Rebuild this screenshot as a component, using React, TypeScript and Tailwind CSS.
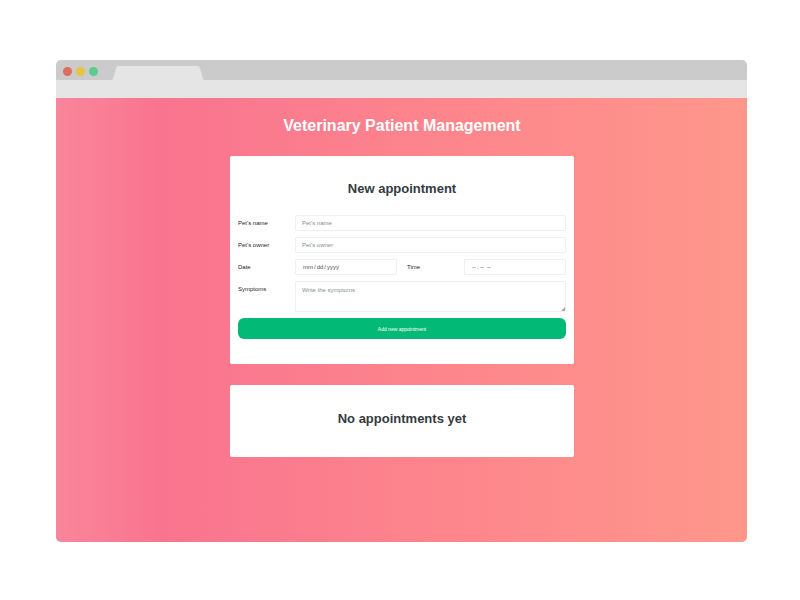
import type { ReactNode } from 'react';

const field =
  'block w-full rounded-[1px] border border-[#f0f0f0] bg-white px-[6px] text-[6px] leading-[8px] outline-none placeholder:text-[#868e96] placeholder:opacity-100';

function Label({ htmlFor, indent, children }: { htmlFor: string; indent?: boolean; children: ReactNode }) {
  return (
    <label
      htmlFor={htmlFor}
      className={`pt-1 text-[6px] leading-[8px] text-[#212529] ${indent ? 'pl-[10px]' : ''}`}
    >
      {children}
    </label>
  );
}

function BrowserBar() {
  return (
    <header>
      <div className="flex h-5 items-end bg-[#cbcbcb] pl-[7px]">
        <div className="flex gap-1 pb-1">
          <span className="size-[9px] rounded-full bg-[#e06c60]" />
          <span className="size-[9px] rounded-full bg-[#e5c543]" />
          <span className="size-[9px] rounded-full bg-[#5ccb8b]" />
        </div>
        <svg className="ml-[14px] h-[14px] w-[92px]" viewBox="0 0 92 14" aria-hidden="true">
          <path d="M0 14C1 13 1 12 1.5 11L4 2Q4.5 0 6.500 0H85.500Q87.500 0 88 2L90.500 11C91 12 91 13 92 14Z" fill="#e5e5e5" />
        </svg>
      </div>
      <div className="h-[18px] bg-[#e5e5e5]" />
    </header>
  );
}

export default function App() {
  return (
    <div className="flex min-h-screen flex-col bg-white pt-[60px] pr-[53px] pb-[58px] pl-[56px] font-['Liberation_Sans',Arial,sans-serif]">
      <div className="flex grow flex-col overflow-hidden rounded-[5px]">
        <BrowserBar />
        <main className="grow bg-[linear-gradient(to_right,#f9869c_0%,#f9748f_15%,#fd868c_58%,#fe978b_100%)] pt-[18px] pb-[60px] pl-px">
          <h1 className="text-center text-[16px] leading-[20px] font-bold text-white">
            Veterinary Patient Management
          </h1>
          <div className="mx-auto mt-5 flex w-full max-w-[344px] flex-col gap-[21px]">
            <section className="rounded-[2px] bg-white px-2 pt-[25px] pb-[25px]">
              <h2 className="text-center text-[13px] leading-[16px] font-bold text-[#343a40]">
                New appointment
              </h2>
              <form
                className="mt-[18px] grid grid-cols-[57px_1fr_67px_1fr] gap-y-[6px]"
                onSubmit={(e) => e.preventDefault()}
              >
                <Label htmlFor="pet">Pet's name</Label>
                <div className="col-span-3">
                  <input id="pet" type="text" placeholder="Pet's name" className={`${field} h-4`} />
                </div>
                <Label htmlFor="owner">Pet's owner</Label>
                <div className="col-span-3">
                  <input id="owner" type="text" placeholder="Pet's owner" className={`${field} h-4`} />
                </div>
                <Label htmlFor="date">Date</Label>
                <input
                  id="date"
                  type="date"
                  className={`${field} h-4 text-[#495057] [&::-webkit-calendar-picker-indicator]:hidden`}
                />
                <Label htmlFor="time" indent>
                  Time
                </Label>
                <input
                  id="time"
                  type="time"
                  className={`${field} h-4 text-[#495057] [&::-webkit-calendar-picker-indicator]:hidden`}
                />
                <Label htmlFor="symptoms">Symptoms</Label>
                <div className="relative col-span-3">
                  <textarea
                    id="symptoms"
                    placeholder="Write the symptoms"
                    className={`${field} h-[31px] resize-none overflow-hidden pt-1`}
                  />
                  <svg className="pointer-events-none absolute right-px bottom-px size-1" viewBox="0 0 4 4" aria-hidden="true">
                    <path d="M0 4L4 0V4Z" fill="#a8a8a8" />
                  </svg>
                </div>
                <button
                  type="submit"
                  className="col-span-4 h-[21px] rounded-[6px] bg-[#03b976] text-center text-[5px] leading-[8px] text-white"
                >
                  Add new appointment
                </button>
              </form>
            </section>
            <section className="rounded-[2px] bg-white px-2 pt-[26px] pb-[30px]">
              <h2 className="text-center text-[13px] leading-[16px] font-bold text-[#343a40]">
                No appointments yet
              </h2>
            </section>
          </div>
        </main>
      </div>
    </div>
  );
}
